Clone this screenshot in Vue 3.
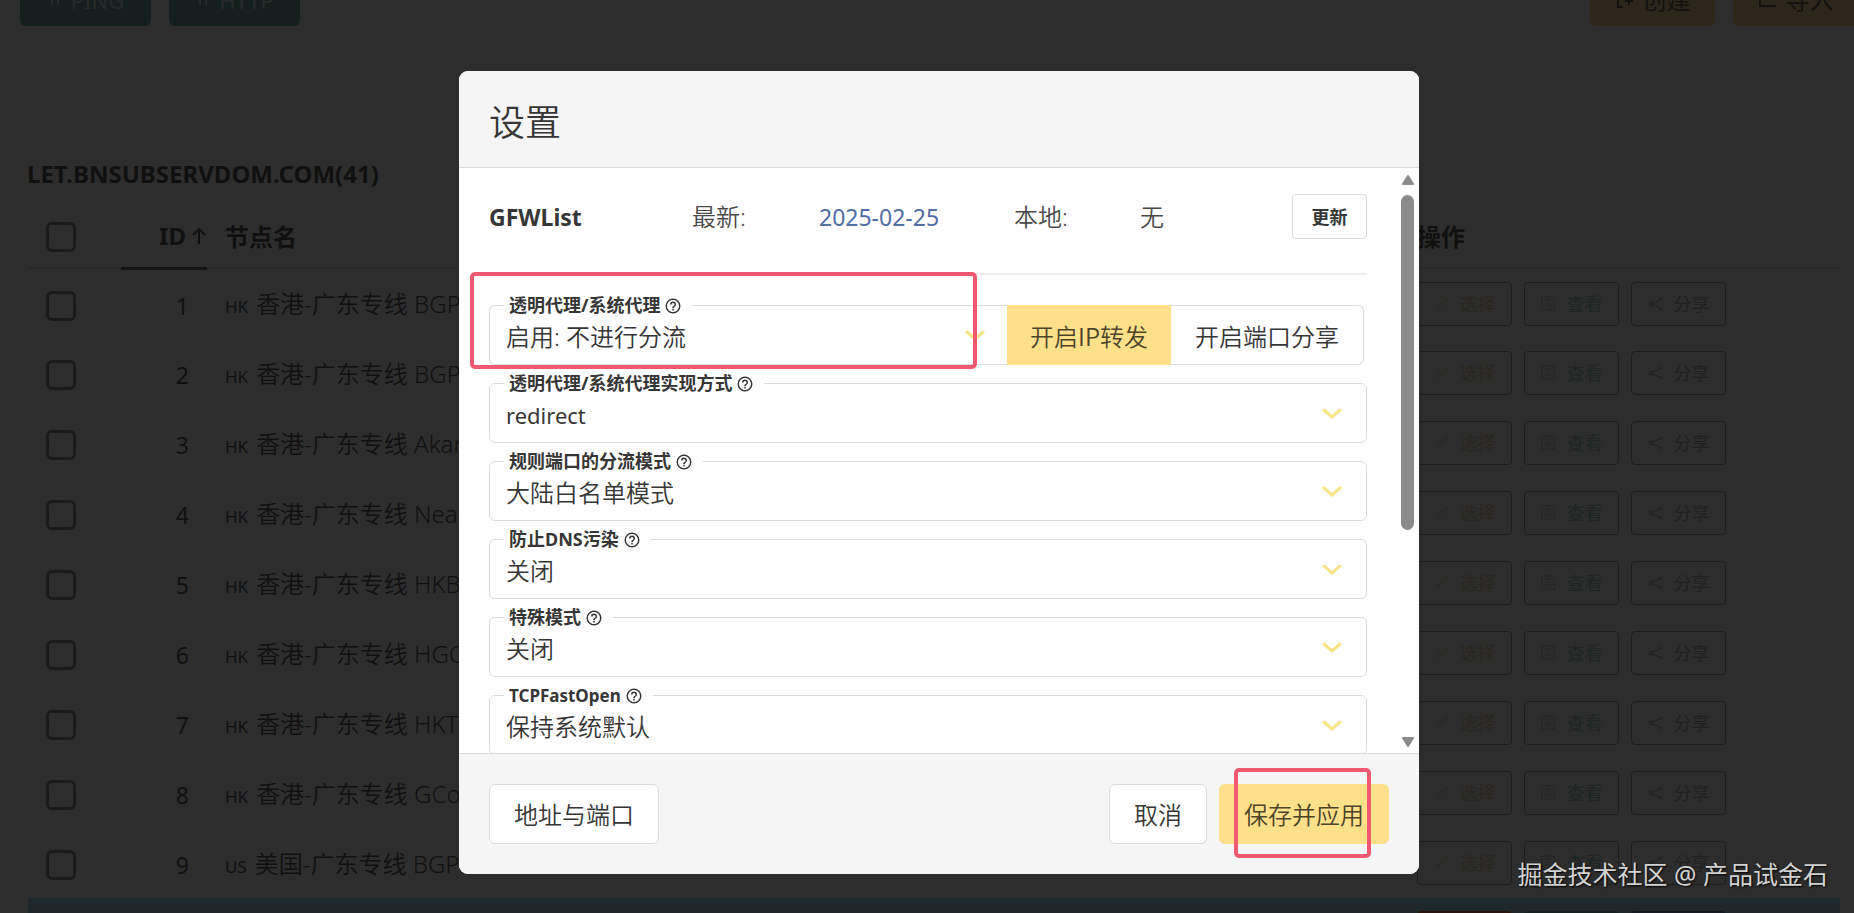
<script setup>
import { ref } from 'vue'

const nodes = ref([
  { id: 1, flag: 'HK', name: '香港-广东专线 BGP' },
  { id: 2, flag: 'HK', name: '香港-广东专线 BGP' },
  { id: 3, flag: 'HK', name: '香港-广东专线 Akari' },
  { id: 4, flag: 'HK', name: '香港-广东专线 Nearoute' },
  { id: 5, flag: 'HK', name: '香港-广东专线 HKBN' },
  { id: 6, flag: 'HK', name: '香港-广东专线 HGC' },
  { id: 7, flag: 'HK', name: '香港-广东专线 HKT' },
  { id: 8, flag: 'HK', name: '香港-广东专线 GCore' },
  { id: 9, flag: 'US', name: '美国-广东专线 BGP' },
  { id: 10, flag: 'US', name: '美国-广东专线 BGP', connected: true },
])

const settings = ref([
  { key: 'type', label: '透明代理/系统代理实现方式', value: 'redirect', latin: true },
  { key: 'rule', label: '规则端口的分流模式', value: '大陆白名单模式' },
  { key: 'dns', label: '防止DNS污染', value: '关闭' },
  { key: 'special', label: '特殊模式', value: '关闭' },
  { key: 'tfo', label: 'TCPFastOpen', value: '保持系统默认', latinLabel: true },
])

const helpIcon =
  'M11,18H13V16H11V18M12,2A10,10 0 0,0 2,12A10,10 0 0,0 12,22A10,10 0 0,0 22,12A10,10 0 0,0 12,2M12,20C7.59,20 4,16.41 4,12C4,7.59 7.59,4 12,4C16.41,4 20,7.59 20,12C20,16.41 16.41,20 12,20M12,6A4,4 0 0,0 8,10H10A2,2 0 0,1 12,8A2,2 0 0,1 14,10C14,12 11,11.75 11,15H13C13,12.75 16,12.5 16,10A4,4 0 0,0 12,6Z'
</script>

<template>
  <div class="app">
    <main class="page">
      <div class="toolbar">
        <button class="tool teal" type="button">
          <svg viewBox="0 0 16 16" width="16" height="16"><path d="M5 1v12M11 1v12M2 6h12" /></svg>PING
        </button>
        <button class="tool teal" type="button">
          <svg viewBox="0 0 16 16" width="16" height="16"><path d="M5 1v12M11 1v12M2 6h12" /></svg>HTTP
        </button>
        <span class="spacer"></span>
        <button class="tool yellow" type="button">
          <svg viewBox="0 0 20 20" width="20" height="20"><path d="M8 3H3v14h5M14 6v9M10 11h8" /></svg>创建
        </button>
        <button class="tool yellow" type="button">
          <svg viewBox="0 0 20 20" width="20" height="20"><path d="M2 8v8h16M6 8h12" /></svg>导入
        </button>
      </div>

      <h2 class="group">LET.BNSUBSERVDOM.COM(41)</h2>

      <table class="nodes">
        <thead>
          <tr>
            <th class="c-check"><input type="checkbox" aria-label="全选" /></th>
            <th class="c-id sorted">
              <span class="sort">ID<svg viewBox="0 0 16 20" width="16" height="20"><path d="M8 18V3M2 9l6-6 6 6" /></svg></span>
            </th>
            <th class="c-name">节点名</th>
            <th class="c-ops">操作</th>
          </tr>
        </thead>
        <tbody>
          <tr v-for="n in nodes" :key="n.id" :class="{ connected: n.connected }">
            <td class="c-check"><input type="checkbox" :aria-label="n.name" /></td>
            <td class="c-id">{{ n.id }}</td>
            <td class="c-name"><span class="flag">{{ n.flag }}</span>{{ n.name }}</td>
            <td class="c-ops">
              <div class="ops">
                <button class="op pick" type="button">
                  <svg viewBox="0 0 16 16" width="16" height="16"><path d="M3 12l1-3 8-7 2 2-8 7-3 1" /></svg>选择
                </button>
                <button class="op view" type="button">
                  <svg viewBox="0 0 16 16" width="16" height="16"><path d="M6 14H1V1h12v6M4 4h6M4 7h3M4 10h2M8 9h6v5H8z" /></svg>查看
                </button>
                <button class="op share" type="button">
                  <svg viewBox="0 0 16 16" width="16" height="16"><path d="M13 3L3 8l10 5" /><circle cx="13" cy="3" r="1" /><circle cx="3" cy="8" r="2" /><circle cx="13" cy="13" r="1" /></svg>分享
                </button>
              </div>
            </td>
          </tr>
        </tbody>
      </table>
    </main>

    <div class="overlay">
      <section class="modal" role="dialog" aria-labelledby="modal-title">
        <header class="modal-head"><h1 id="modal-title">设置</h1></header>

        <div class="modal-body">
          <div class="content">
            <div class="gfw">
              <strong>GFWList</strong>
              <span>最新:</span>
              <a href="#" class="date">2025-02-25</a>
              <span>本地:</span>
              <span>无</span>
              <button class="btn small" type="button">更新</button>
            </div>
            <hr />

            <div class="addons">
              <div class="field grow">
                <label for="s-proxy">透明代理/系统代理<svg viewBox="0 0 24 24" width="18" height="18"><path :d="helpIcon" /></svg></label>
                <select id="s-proxy"><option>启用: 不进行分流</option></select>
                <svg class="chevron" viewBox="0 0 20 12" width="20" height="12"><path d="M2 2l8 7 8-7" /></svg>
                <span class="mark mark-field"></span>
              </div>
              <button class="addon on" type="button">开启IP转发</button>
              <button class="addon last" type="button">开启端口分享</button>
            </div>

            <div v-for="s in settings" :key="s.key" class="field">
              <label :for="'s-' + s.key" :class="{ latin: s.latinLabel }">{{ s.label }}<svg viewBox="0 0 24 24" width="18" height="18"><path :d="helpIcon" /></svg></label>
              <select :id="'s-' + s.key" :class="{ latin: s.latin }"><option>{{ s.value }}</option></select>
              <svg class="chevron" viewBox="0 0 20 12" width="20" height="12"><path d="M2 2l8 7 8-7" /></svg>
            </div>
          </div>

          <div class="scrollbar" aria-hidden="true">
            <svg viewBox="0 0 14 12" width="14" height="12"><path d="M7 2L12 10H2Z" /></svg>
            <div class="track"><div class="thumb"></div></div>
            <svg viewBox="0 0 14 12" width="14" height="12"><path d="M7 10L12 2H2Z" /></svg>
          </div>
        </div>

        <footer class="modal-foot">
          <button class="btn" type="button">地址与端口</button>
          <span class="spacer"></span>
          <button class="btn" type="button">取消</button>
          <button class="btn save" type="button">保存并应用<span class="mark mark-save"></span></button>
        </footer>
      </section>
    </div>

    <p class="watermark">掘金技术社区 @ 产品试金石</p>
  </div>
</template>

<style>
body {
  margin: 0;
  overflow: hidden;
}
</style>

<style scoped>
.app {
  position: relative;
  height: 100vh;
  overflow: hidden;
  background: #fff;
  color: #363636;
  font-family: "Noto Sans", "Noto Sans CJK SC", sans-serif;
  font-size: 24px;
  line-height: 36px;
}
.app * {
  box-sizing: border-box;
}
button,
select {
  font: inherit;
  color: inherit;
  margin: 0;
}
.spacer {
  flex: 1;
}

/* node list */
.page {
  width: calc(100% + 4px);
}
.toolbar {
  display: flex;
  gap: 18px;
  margin-top: -34px;
  padding: 0 0 0 20px;
}
.tool {
  display: flex;
  align-items: center;
  justify-content: center;
  gap: 8px;
  width: 131px;
  height: 60px;
  padding: 8px 0 0;
  border: 0;
  border-radius: 6px;
  font-size: 22px;
}
.tool svg,
.op svg,
.sort svg {
  fill: none;
  stroke: currentColor;
  stroke-width: 2;
}
.teal {
  background: #4d9a96;
  color: #d8e8e8;
}
.yellow {
  width: 125px;
  background: #ffd67a;
  color: #4d4329;
  font-size: 24px;
}
.group {
  margin: 130px 0 28px 27px;
  font-size: 24px;
  line-height: 36px;
  font-weight: 700;
}
.nodes {
  width: calc(100% - 46px);
  margin-left: 28px;
  border-collapse: collapse;
  table-layout: fixed;
}
.nodes th,
.nodes td {
  padding: 0 18px;
  text-align: left;
  white-space: nowrap;
}
.nodes td {
  height: 70px;
}
.nodes th {
  height: 48px;
  padding-bottom: 14px;
  border-bottom: 2px solid #e4e4e4;
  line-height: 32px;
  font-weight: 700;
}
.nodes .c-check {
  width: 93px;
}
.nodes .c-id {
  width: 86px;
  text-align: right;
}
.nodes .c-ops {
  width: 441px;
}
.nodes th.sorted {
  padding-right: 0;
  border-bottom: 3px solid #555;
}
.sort {
  display: inline-flex;
  align-items: center;
  gap: 5px;
}
.nodes td.c-check,
.nodes td.c-id,
.nodes td.c-name {
  padding-top: 4px;
}
.nodes td.c-name {
  font-weight: 350;
}
.nodes td.c-id {
  font-size: 23px;
}
.nodes input {
  display: block;
  appearance: none;
  width: 30px;
  height: 30px;
  margin: 0;
  border: 3px solid #7a7a7a;
  border-radius: 6px;
}
.flag {
  margin-right: 8px;
  font-size: 17px;
  font-weight: 400;
}
.ops {
  display: flex;
  gap: 12px;
}
.op {
  display: flex;
  align-items: center;
  justify-content: center;
  gap: 10px;
  width: 95px;
  height: 44px;
  padding: 0;
  border: 1px solid #8c8c8c;
  border-radius: 4px;
  background: none;
  font-size: 18px;
}
.op svg {
  stroke-width: 1;
}
.pick {
  color: #e0c69c;
}
.view {
  color: #9bbdbb;
}
.share {
  color: #a2a2a2;
}
.connected {
  background: #92d2e7;
}
.connected .op {
  border: 0;
  color: #fff;
}
.connected .pick {
  background: #f14e10;
}
.connected .view {
  background: #4fa3a0;
}
.connected .share {
  background: #506da4;
}

/* dialog */
.overlay {
  position: absolute;
  inset: 0;
  display: flex;
  justify-content: center;
  padding: 71px 0 39px 24px;
  background: rgba(10, 10, 10, 0.86);
}
.modal {
  display: flex;
  flex-direction: column;
  width: 960px;
  max-width: 100%;
  border-radius: 9px;
  overflow: hidden;
  background: #fff;
}
.modal-head {
  padding: 28px 30px 20px;
  border-bottom: 1px solid #dbdbdb;
  background: #f5f5f5;
}
.modal-head h1 {
  margin: 0;
  font-size: 36px;
  line-height: 48px;
  font-weight: 350;
}
.modal-body {
  display: flex;
  flex: 1;
  min-height: 0;
  overflow: hidden;
}
.content {
  flex: 1;
  min-width: 0;
  padding: 26px 30px 0;
}
.gfw {
  display: grid;
  grid-template-columns: 203fr 127fr 195fr 126fr 152fr 75fr;
  align-items: center;
  color: #4a4a4a;
}
.gfw span,
.addon,
.btn,
.field select {
  font-weight: 350;
}
.gfw strong {
  color: #363636;
  font-size: 23px;
}
.date {
  color: #506da4;
  font-size: 23px;
  text-decoration: none;
}
hr {
  height: 2px;
  margin: 34px 0 30px;
  border: 0;
  background: #ededed;
}
.addons {
  display: flex;
  margin-bottom: 18px;
  padding-right: 3px;
}
.field {
  position: relative;
  margin-bottom: 18px;
}
.addons .field {
  margin-bottom: 0;
}
.grow {
  flex: 1;
}
.field label {
  position: absolute;
  top: -13px;
  left: 15px;
  display: flex;
  align-items: center;
  gap: 4px;
  padding: 0 10px 0 5px;
  background: #fff;
  font-size: 18px;
  line-height: 27px;
  font-weight: 700;
}
.field label.latin {
  font-size: 17px;
}
.field label svg {
  fill: #363636;
}
.field select {
  display: block;
  width: 100%;
  height: 60px;
  padding: 4px 60px 0 16px;
  border: 1px solid #dbdbdb;
  border-radius: 6px;
  appearance: none;
  background: #fff;
}
.field select.latin {
  font-size: 22px;
  font-weight: 400;
}
.grow select {
  border-right: 0;
  border-radius: 6px 0 0 6px;
}
.chevron {
  position: absolute;
  top: 25px;
  right: 25px;
  fill: none;
  stroke: #f7e487;
  stroke-width: 3;
  stroke-linecap: round;
}
.grow .chevron {
  right: 22px;
}
.addon {
  height: 60px;
  padding: 2px 24px 0;
  border: 1px solid #dbdbdb;
  background: #fff;
  font-family: "Noto Sans CJK SC", sans-serif;
}
.addon.on {
  padding: 2px 22px 0;
  border-color: #ffe08a;
  background: #ffe08a;
  color: #4d4329;
}
.addon.last {
  border-left: 0;
  border-radius: 0 6px 6px 0;
}
.btn {
  position: relative;
  height: 60px;
  padding: 2px 24px 0;
  border: 1px solid #dbdbdb;
  border-radius: 6px;
  background: #fff;
}
.btn.small {
  height: 45px;
  padding: 0;
  border-radius: 4px;
  color: #363636;
  font-size: 18px;
  font-weight: 700;
}
.btn.save {
  border-color: #ffe08a;
  background: #ffe08a;
  color: #4d4329;
}
.modal-foot {
  display: flex;
  gap: 12px;
  padding: 30px;
  border-top: 1px solid #dbdbdb;
  background: #f5f5f5;
}
.scrollbar {
  display: flex;
  flex-direction: column;
  align-items: center;
  width: 22px;
  padding: 6px 1px 5px 0;
}
.scrollbar svg {
  fill: #8b8b8b;
  stroke: #8b8b8b;
  stroke-width: 2;
  stroke-linejoin: round;
}
.track {
  flex: 1;
  width: 13px;
  padding: 9px 0;
}
.thumb {
  height: 63%;
  border-radius: 7px;
  background: #8b8b8b;
}

/* highlight frames */
.mark {
  position: absolute;
  z-index: 2;
  border: 4px solid #ef5a70;
  border-radius: 5px;
  pointer-events: none;
}
.mark-field {
  inset: -33px 30px -4px -19px;
}
.mark-save {
  inset: -17px 17px -15px 14px;
}

.watermark {
  position: absolute;
  right: 26px;
  bottom: 21px;
  margin: 0;
  color: #d2d2d2;
  font-size: 25px;
  text-shadow: 1px 1px 2px #000;
}
</style>
